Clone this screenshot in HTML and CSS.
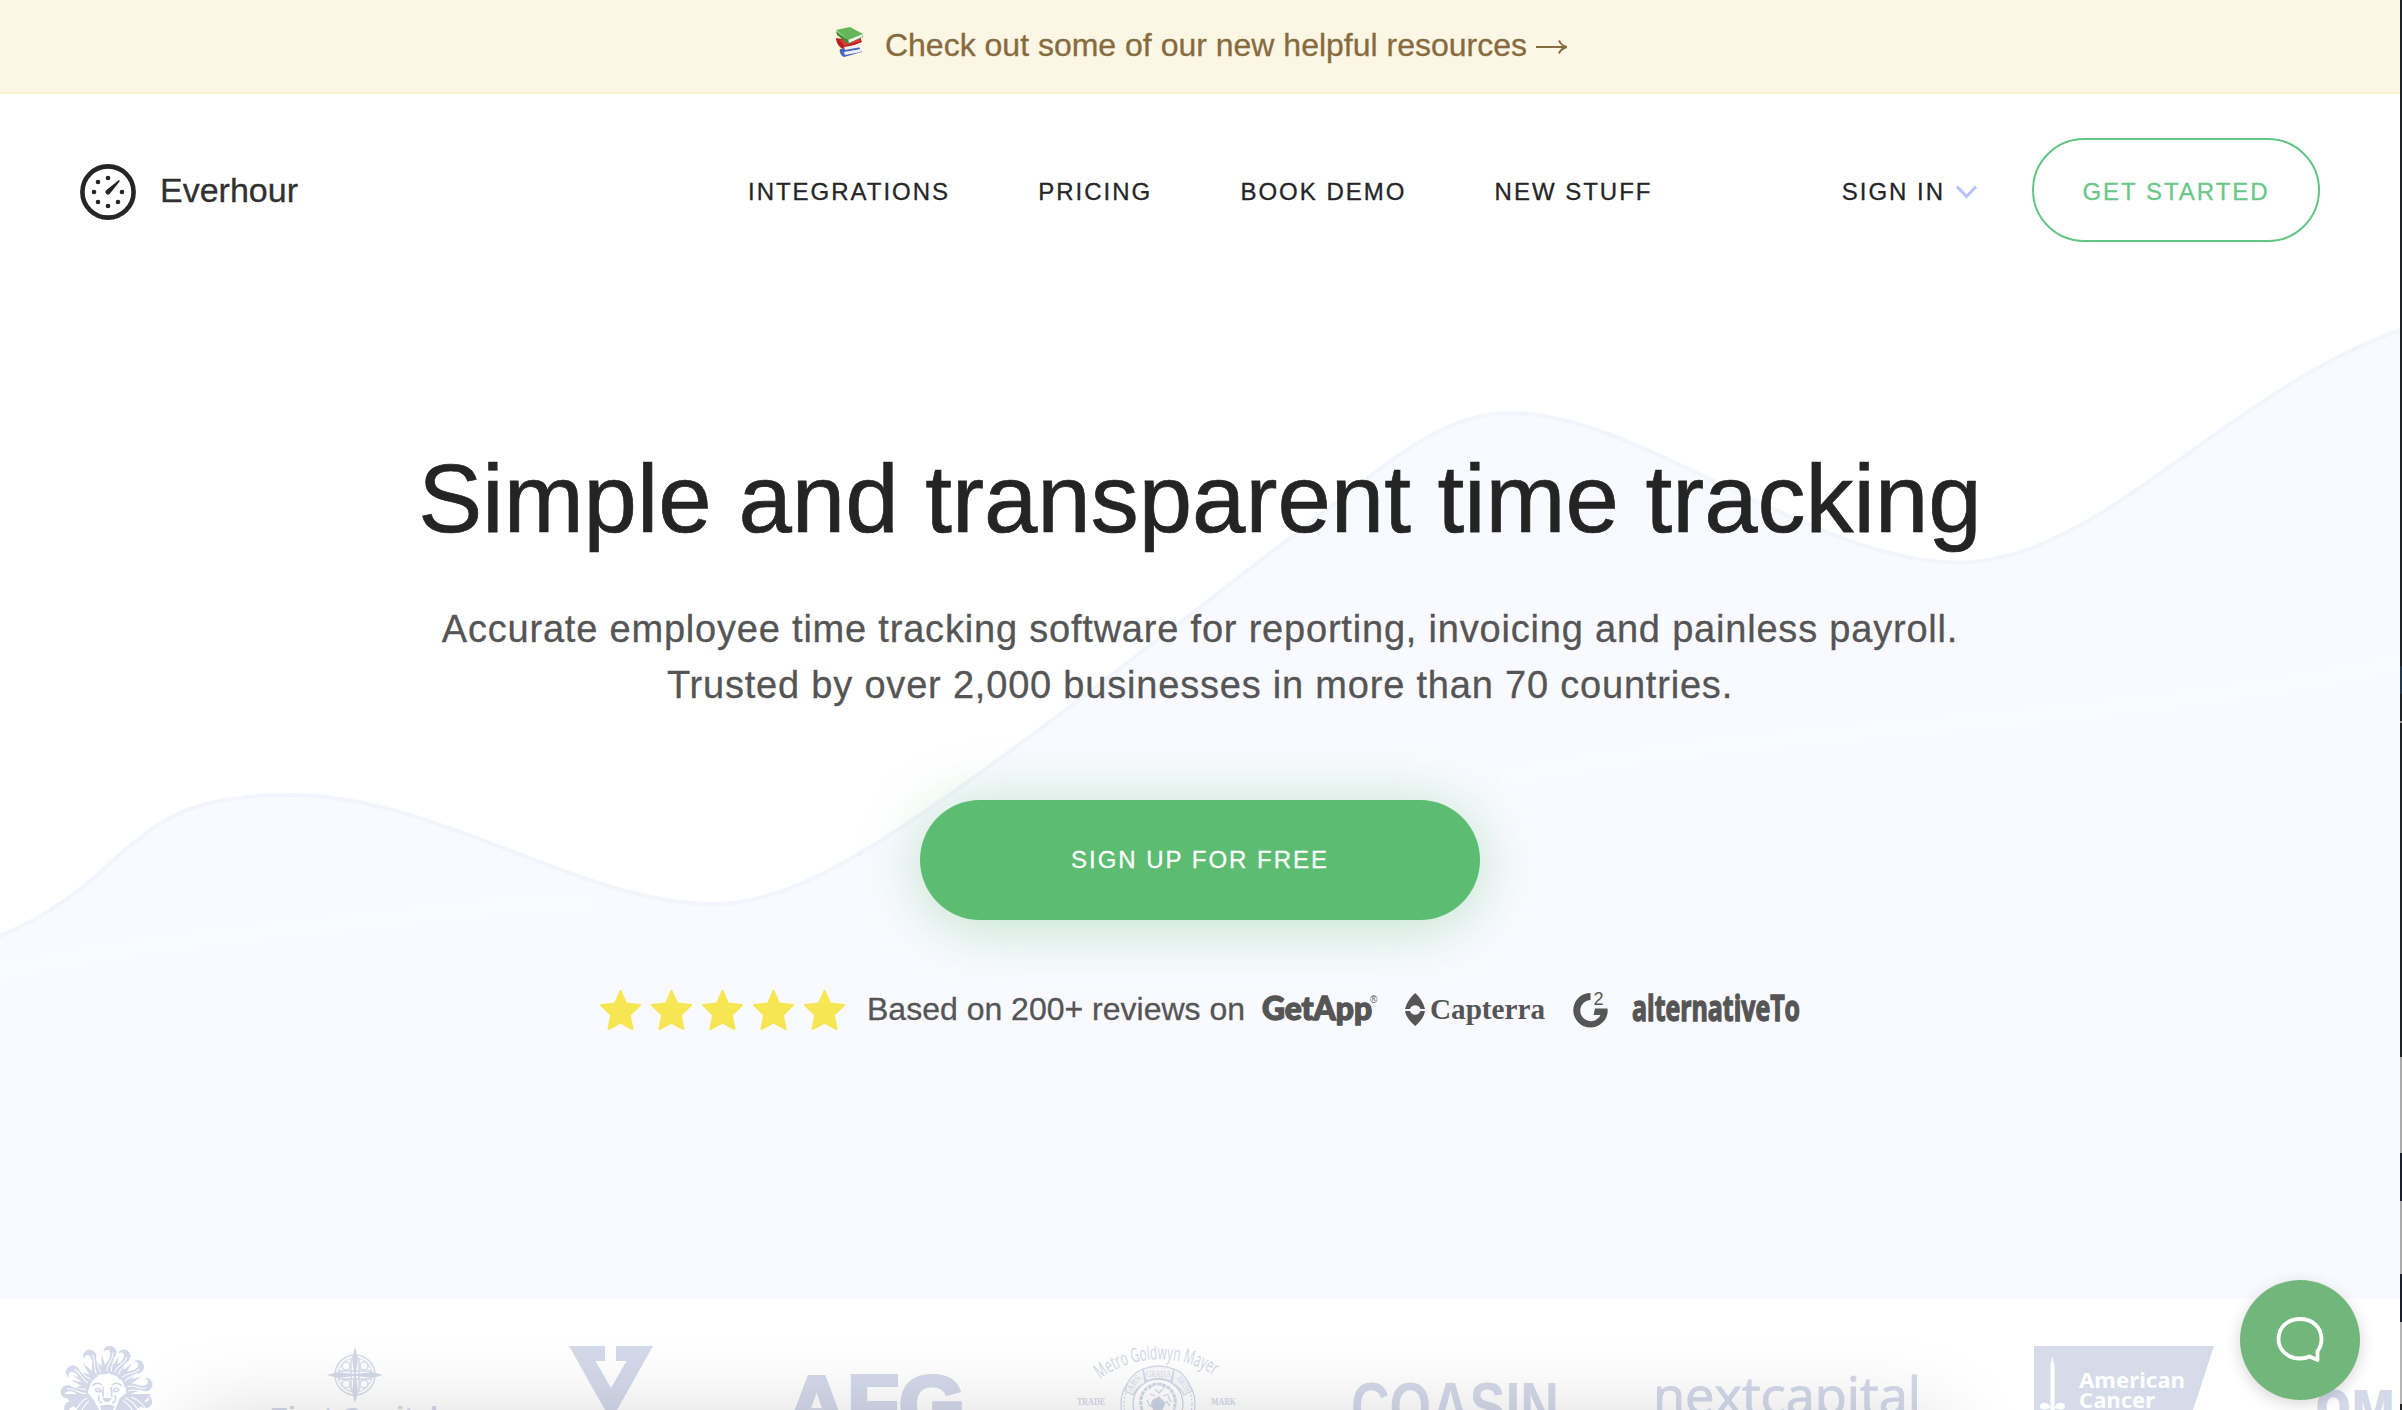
FILE: index.html
```html
<!DOCTYPE html>
<html lang="en">
<head>
<meta charset="utf-8">
<title>Everhour</title>
<link rel="stylesheet" href="styles.css">
</head>
<body>
<div class="page">
  <svg class="wave" width="2402" height="1299" viewBox="0 0 2402 1299">
    <path class="wave-fill" d="M-5 938C70 908 100 870 130 846C165 816 200 795 290 795C440 795 580 905 715 904C800 904 900 834 1079 700L1376 472C1425 434 1467 413 1510 413C1640 413 1810 562 1959 562.5C2100 562 2225 390 2406 328V1299H-5Z"/>
    <path class="wave-glow" d="M-5 974C150 937 350 925 520 904Q560 898 590 908M1500 778C1800 722 2100 728 2402 662"/>
    <path class="wave-line" d="M-5 938C70 908 100 870 130 846C165 816 200 795 290 795C440 795 580 905 715 904C800 904 900 834 1079 700L1376 472C1425 434 1467 413 1510 413C1640 413 1810 562 1959 562.5C2100 562 2225 390 2406 328"/>
  </svg>

  <a class="banner">
    <svg class="books" width="30" height="30" viewBox="0 0 30 30">
      <path fill="#4668b8" d="M5 22l19-2 3 5-18 5c-3-1-5-5-4-8z"/><path fill="#f2f2f5" d="M9 25l17-3v3l-16 3z"/>
      <path fill="#b81f24" d="M1 11l6 1 18-2 2 5-18 7c-5-1-8-7-8-11z"/><path fill="#e03a30" d="M5 13l17-3 4 4-17 5z"/><path fill="#f4efee" d="M9 20l17-3v3l-16 3z"/>
      <path fill="#3f8f35" d="M1 4l1 4 11 9 15-7-1-2-14 5z"/><path fill="#f0f3ee" d="M13 12l14-5v3l-13 6z"/><path fill="#66b558" d="M1 3L15 0l13 7-15 6z"/>
    </svg>
    <span class="banner-text">Check out some of our new helpful resources</span>
    <svg class="arrow" width="31" height="16" viewBox="0 0 31 16"><path d="M0 8H30M23 1.500Q25 6.500 31 8Q25 9.500 23 14.500" fill="none" stroke="#876b3f" stroke-width="2"/></svg>
  </a>

  <header class="header">
    <a class="brand">
      <svg width="56" height="56" viewBox="0 0 56 56">
        <circle cx="28" cy="28" r="25.6" fill="none" stroke="#232527" stroke-width="4.6"/>
        <g fill="#232527"><circle cx="28" cy="14" r="2.3"/><circle cx="18" cy="18" r="2.3"/><circle cx="14" cy="28" r="2.3"/><circle cx="18" cy="38" r="2.3"/><circle cx="28" cy="42" r="2.3"/><circle cx="38" cy="38" r="2.3"/><circle cx="42" cy="28" r="2.3"/>
        <path d="M26.2 26.2L38.6 16.2Q40.2 16 39.6 17.6L29.8 29.8A2.5 2.5 0 0 1 26.2 26.2Z"/></g>
      </svg>
      <span>Everhour</span>
    </a>
    <nav class="nav"><a>INTEGRATIONS</a><a>PRICING</a><a>BOOK DEMO</a><a>NEW STUFF</a></nav>
    <div class="account">
      <a class="signin">SIGN IN
        <svg width="21" height="14" viewBox="0 0 21 14"><path d="M1 1.5L10.5 11.5L20 1.5" fill="none" stroke="#b5c3fc" stroke-width="3"/></svg>
      </a>
      <a class="start">GET STARTED</a>
    </div>
  </header>

  <main class="hero">
    <h1>Simple and transparent time tracking</h1>
    <p>Accurate employee time tracking software for reporting, invoicing and painless payroll.<br>Trusted by over 2,000 businesses in more than 70 countries.</p>
    <a class="signup">SIGN UP FOR FREE</a>
    <div class="reviews">
      <svg width="246" height="40" viewBox="0 0 246 40">
        <defs><path id="star" stroke="#f6e652" stroke-width="2" stroke-linejoin="round" d="M20.5 1L26 13.5L40 15L29.800 25L32.500 39L20.500 32.500L8.500 39L11.200 25L1 15L15 13.500Z"/></defs>
        <g fill="#f6e652"><use href="#star"/><use href="#star" x="51"/><use href="#star" x="102"/><use href="#star" x="153"/><use href="#star" x="204"/></g>
      </svg>
      <span>Based on 200+ reviews on</span>
      <svg class="src" width="118" height="40" viewBox="0 0 118 40">
        <text class="getapp" x="0" y="30" textLength="110" lengthAdjust="spacingAndGlyphs">GetApp</text>
        <text class="reg" x="108" y="13">®</text>
      </svg>
      <svg class="src" width="140" height="40" viewBox="0 0 140 40">
        <path d="M10.200 3C15 7 18 12 20 19H15.500A5.600 5.600 0 0 0 5 19H0C2 12 5.500 7 10.200 3ZM0 21H5A5.600 5.600 0 0 0 15.500 21H20C19 27 15 32 10.200 36C5.500 32 1 27 0 21Z"/>
        <text class="capterra" x="25" y="29" textLength="115" lengthAdjust="spacingAndGlyphs">Capterra</text>
      </svg>
      <svg class="src" width="37" height="40" viewBox="0 0 37 40">
        <path d="M17.500 3V10A10.600 10.600 0 1 0 27.500 25H20.500L22 18.500H34.500C36 29 27 37.500 17.500 37.500A17 17 0 0 1 17.500 3Z"/>
        <text class="sup" x="20.500" y="15">2</text>
      </svg>
      <svg class="src" width="168" height="40" viewBox="0 0 168 40">
        <text class="alt" x="0" y="30.500" textLength="168" lengthAdjust="spacingAndGlyphs">alternativeTo</text>
      </svg>
    </div>
  </main>

  <section class="clients">
    <svg width="98" height="64" viewBox="0 0 98 64">
      <defs>
        <path id="flame" d="M-6 -19C-8 -28 -1 -31 -2 -38C-3 -44 -8 -42 -9 -39C-10 -46 -1 -49 3 -43C6 -38 1 -34 3 -30C4 -27 5 -24 5 -19Z"/>
        <path id="rib" d="M-3 -21C-4 -29 2 -32 .5 -40M1.500 -21C0 -28 3 -32 3 -36" fill="none" stroke="#fff" stroke-width="1"/>
        <path id="spike" d="M-3.500 -18L0 -38L3.500 -18Z"/>
      </defs>
      <g transform="translate(48 46)">
        <g><use href="#flame" transform="rotate(-86)"/><use href="#flame" transform="rotate(-56)"/><use href="#flame" transform="rotate(-22)"/><use href="#flame" transform="rotate(8)"/><use href="#flame" transform="rotate(29)"/><use href="#flame" transform="rotate(54)"/><use href="#flame" transform="rotate(83)"/><use href="#flame" transform="rotate(108)"/><use href="#flame" transform="rotate(-110)"/></g>
        <g><use href="#spike" transform="rotate(-72)"/><use href="#spike" transform="rotate(-64)"/><use href="#spike" transform="rotate(-40)"/><use href="#spike" transform="rotate(-8)"/><use href="#spike" transform="rotate(18)"/><use href="#spike" transform="rotate(41)"/><use href="#spike" transform="rotate(66)"/></g>
        <g><use href="#rib" transform="rotate(-86)"/><use href="#rib" transform="rotate(-56)"/><use href="#rib" transform="rotate(-22)"/><use href="#rib" transform="rotate(8)"/><use href="#rib" transform="rotate(29)"/><use href="#rib" transform="rotate(54)"/><use href="#rib" transform="rotate(83)"/></g>
        <path d="M-44 2H44L30 18H-30Z"/>
        <path fill="none" stroke="#fff" stroke-width="1.200" d="M-20 6Q-26 9 -31 18M-18 9Q-22 12 -25 18M18 6Q26 9 31 18M16 9Q22 12 25 18M24 5Q34 9 38 16"/>
        <path fill="#fff" d="M-17 4C-19 -6 -15 -13 -9 -15L-5 -18L0 -15L5 -17L9 -14C16 -13 19 -6 17 3L13 6L8 18H-8L-13 8Z"/>
        <path fill="none" stroke="#d0d6e8" stroke-width="1.600" d="M-15 -6Q-10 -11 -5 -7M5 -7Q10 -11 15 -6M-12 -2Q-9 -6 -6 -1Q-9 1 -12 -2M6 -1Q9 -6 12 -2Q9 1 6 -1M-4 -5V5M4 -5L5 5M-8 3Q-10 10 -4 11M8 3Q10 10 5 11"/>
        <path d="M-5 6H5L2 10H-2ZM-7 14Q0 11 8 14L6 18H-6Z"/>
      </g>
    </svg>
    <svg width="168" height="64" viewBox="0 0 168 64">
      <g transform="translate(85 29)" fill="none" stroke="#d8ddec" stroke-width="1.500">
        <circle r="20"/><circle r="17" stroke-width="1"/><path d="M-4 -17V17M4 -17V17M-17 -4H17M-17 4H17"/>
        <circle cx="-9" cy="-9" r="4"/><circle cx="9" cy="-9" r="4"/><circle cx="-9" cy="9" r="4"/><circle cx="9" cy="9" r="4"/>
        <path stroke="none" fill="#d3d9e9" d="M0 -28L3 -17L1 -1L17 -3L28 0L17 3L1 1L3 17L0 28L-3 17L-1 1L-17 3L-28 0L-17 -3L-1 -1L-3 -17Z"/>
      </g>
      <text class="firstcap" x="0" y="82" textLength="168">First Capital</text>
    </svg>
    <svg width="86" height="64" viewBox="0 0 86 64"><path d="M0 0H36V15H26.500L42 42L57.500 15H47V0H84L48 64H36Z"/></svg>
    <svg class="wide" width="174" height="64" viewBox="0 0 174 64"><text class="afg" x="-4" y="87" textLength="179" lengthAdjust="spacingAndGlyphs">AFG</text></svg>
    <svg width="160" height="64" viewBox="0 0 160 64">
      <path id="arc" fill="none" d="M23 33A100 100 0 0 1 142 33"/>
      <text class="mgm"><textPath href="#arc" textLength="121" lengthAdjust="spacingAndGlyphs">Metro Goldwyn Mayer</textPath></text>
      <text class="small" x="0" y="59" textLength="28" lengthAdjust="spacingAndGlyphs">TRADE</text><text class="small" x="134" y="59" textLength="25" lengthAdjust="spacingAndGlyphs">MARK</text>
      <g fill="none" stroke="#d3d9e9" stroke-width="1.300">
        <circle cx="81" cy="58" r="37"/><circle cx="81" cy="58" r="34" stroke-dasharray="2 2"/><circle cx="81" cy="58" r="25"/>
        <path fill="#f8f8fa" d="M66 23Q81 17 97 23L94 35Q81 30 69 35ZM66 23L60 26Q50 34 48 45L56 49Q60 41 68 37ZM97 23L103 26Q112 34 115 45L107 49Q103 41 95 37Z"/>
        <path stroke-width="3" stroke-dasharray="4 1" d="M65 64Q61 50 70 42Q81 34 92 42Q101 50 97 64"/>
        <path d="M73 48L78 50M86 50L92 48M72 43L76 39M83 38L88 42M89 55L93 60M70 54L73 61M78 43L82 47L86 43M91 50L94 56"/>
        <path fill="#ccd3e5" d="M76 54L82 51L88 57L85 64H77L74 59Z"/>
      </g>
      <text class="latin" transform="translate(54 46) rotate(-54)">ARS</text><text class="latin" x="69" y="31" textLength="25" lengthAdjust="spacingAndGlyphs">GRATIA</text><text class="latin" transform="translate(99 33) rotate(50)" textLength="17" lengthAdjust="spacingAndGlyphs">ARTIS</text>
    </svg>
    <svg width="206" height="64" viewBox="0 0 206 64"><text class="coasin" x="-2" y="84" textLength="208" lengthAdjust="spacingAndGlyphs">COASIN</text></svg>
    <svg width="268" height="64" viewBox="0 0 268 64"><text class="next" x="-2" y="68" textLength="268" lengthAdjust="spacingAndGlyphs">nextcapital</text></svg>
    <svg width="180" height="64" viewBox="0 0 180 64">
      <path fill="#d6dbea" d="M0 0H180L159 64H0Z"/>
      <path fill="#fff" d="M16.500 18L18.500 11L20.500 18V64H16.500ZM16.500 62Q6 66 6 60Q7 56 12 57Q16 58 16.500 62ZM20.500 62Q31 66 31 60Q30 56 25 57Q21 58 20.500 62Z"/>
      <text class="acs" x="45" y="42" textLength="106" lengthAdjust="spacingAndGlyphs">American</text><text class="acs" x="45" y="61.500" textLength="76" lengthAdjust="spacingAndGlyphs">Cancer</text>
    </svg>
    <svg width="84" height="64" viewBox="0 0 84 64"><text class="om" x="-1" y="80" textLength="80" lengthAdjust="spacingAndGlyphs">OM</text></svg>
  </section>
  <div class="shade"></div>

  <a class="chat">
    <svg width="50" height="48" viewBox="0 0 50 48"><path d="M25 3C37 3 46.500 11 46.500 23C46.500 28 45 32 42.500 35V44L34.500 40.500C31.500 42 28.500 42.500 25 42.500C12.500 42.500 3.500 34 3.500 23C3.500 11 13 3 25 3Z" fill="none" stroke="#fff" stroke-width="3.800" stroke-linejoin="round"/></svg>
  </a>
  <div class="edge"></div>
</div>
</body>
</html>
```
FILE: styles.css
```css
* { box-sizing: border-box; }
body { margin: 0; background: #fff; font-family: "Liberation Sans", Arial, sans-serif; color: #232527; -webkit-text-stroke: 0.3px; }
svg { display: block; -webkit-text-stroke: 0; }
.page { position: relative; width: 2402px; height: 1410px; overflow: hidden; display: flex; flex-direction: column; }
.wave { position: absolute; left: 0; top: 0; z-index: -1; }
.wave-fill { fill: #f9faff; }
.wave-line { fill: none; stroke: #f3f5fe; stroke-width: 4; }
.wave-glow { fill: none; stroke: #fafbff; stroke-width: 14; }

.banner { height: 94px; flex: none; display: flex; align-items: center; justify-content: center; padding-bottom: 3px; background: #fbf7e4; border-bottom: 2px solid #f8f0cd; color: #876b3f; font-size: 32px; line-height: 40px; }
.books { margin-top: -5px; }
.banner-text { margin: 0 9px 0 20px; }
.arrow { margin-top: 5px; }

.header { height: 192px; flex: none; display: grid; grid-template-columns: 668px 1fr auto; align-items: center; padding: 0 82px 0 80px; }
.brand { display: flex; align-items: center; gap: 24px; font-size: 34px; color: #303030; padding-top: 4px; }
.brand span { margin-top: -4px; }
.nav { display: flex; gap: 88.3px; font-size: 24px; letter-spacing: 1.98px; padding-top: 4px; }
.account { display: flex; align-items: center; gap: 55px; font-size: 24px; letter-spacing: 1.98px; }
.signin { display: flex; align-items: center; gap: 11px; padding-top: 4px; }
.start { width: 288px; height: 104px; display: flex; align-items: center; justify-content: center; padding: 4px 0 0 0; border: 2px solid #62c584; border-radius: 52px; color: #69c889; }

.hero { height: 1013px; flex: none; width: 2400px; padding-top: 158px; display: flex; flex-direction: column; align-items: center; }
h1 { margin: 0; font-size: 96px; line-height: 110px; font-weight: 400; color: #242424; -webkit-text-stroke: 0.7px; }
.hero p { margin: 47px 0 0; font-size: 38px; line-height: 56px; letter-spacing: 0.8px; color: #555; text-align: center; }
.signup { flex: none; width: 560px; height: 120px; margin-top: 87px; display: flex; align-items: center; justify-content: center; border-radius: 60px; background: #5bbc72; color: #fff; font-size: 24px; letter-spacing: 1.98px; box-shadow: 0 6px 60px rgba(91, 188, 114, 0.38); }
.reviews { width: 1200px; height: 40px; margin-top: 70px; display: grid; grid-template-columns: 267px 395px 143px 168px 59px 168px; font-size: 32px; line-height: 38px; color: #555; white-space: nowrap; }
.src { fill: #555; overflow: visible; }
.getapp { font: 900 32px Lato, sans-serif; stroke: #555; stroke-width: 1.4; }
.reg { font: 10px "Liberation Sans", sans-serif; }
.capterra { font: 700 29px "Liberation Serif", serif; }
.sup { font: 18px "Liberation Sans", sans-serif; }
.alt { font: 700 35px "Open Sans", sans-serif; stroke: #555; stroke-width: 1.4; }

.clients { height: 111px; flex: none; padding: 47px 2px 0 59px; display: grid; grid-template-columns: 211px 299px 221px 287px 276px 302px 379px 282px 1fr; overflow: hidden; fill: #d3d9e9; }
.wide { overflow: visible; }
.firstcap { font: 700 29px "Liberation Sans", sans-serif; }
.afg { font: 700 81px "Liberation Sans", sans-serif; stroke: #d3d9e9; stroke-width: 4; }
.mgm { font: 20px "Open Sans", sans-serif; }
.small { font: 700 10px "Liberation Serif", serif; }
.latin { font: 9px "Liberation Serif", serif; }
.coasin { font: 700 68px "Liberation Sans", sans-serif; }
.next { font: 400 52px "Open Sans", sans-serif; stroke: #d3d9e9; stroke-width: 1; }
.acs { font: 700 21px "Noto Sans", sans-serif; fill: #fff; }
.om { font: 800 49px "Open Sans", sans-serif; }
.shade { position: absolute; left: 190px; top: 1424px; width: 1750px; height: 100px; box-shadow: 0 0 90px rgba(0, 0, 0, 0.18); }

.chat { position: absolute; left: 2240px; top: 1280px; width: 120px; height: 120px; border-radius: 60px; background: #71b77b; display: flex; align-items: center; justify-content: center; box-shadow: 0 4px 16px rgba(0, 0, 0, 0.16); }
.edge { position: absolute; right: 0; top: 0; width: 2px; height: 1410px; background: linear-gradient(#202224 0 666px, #24384a 666px 694px, #202224 694px 721px, #999 721px 723px, #202224 723px 1057px, #aaa 1057px 1153px, #1b1e2b 1153px 1201px, #aaa 1201px 1274px, #1b1e2b 1274px 1322px, #b4b4b4 1322px 1404px, #202224 1404px); }
```
